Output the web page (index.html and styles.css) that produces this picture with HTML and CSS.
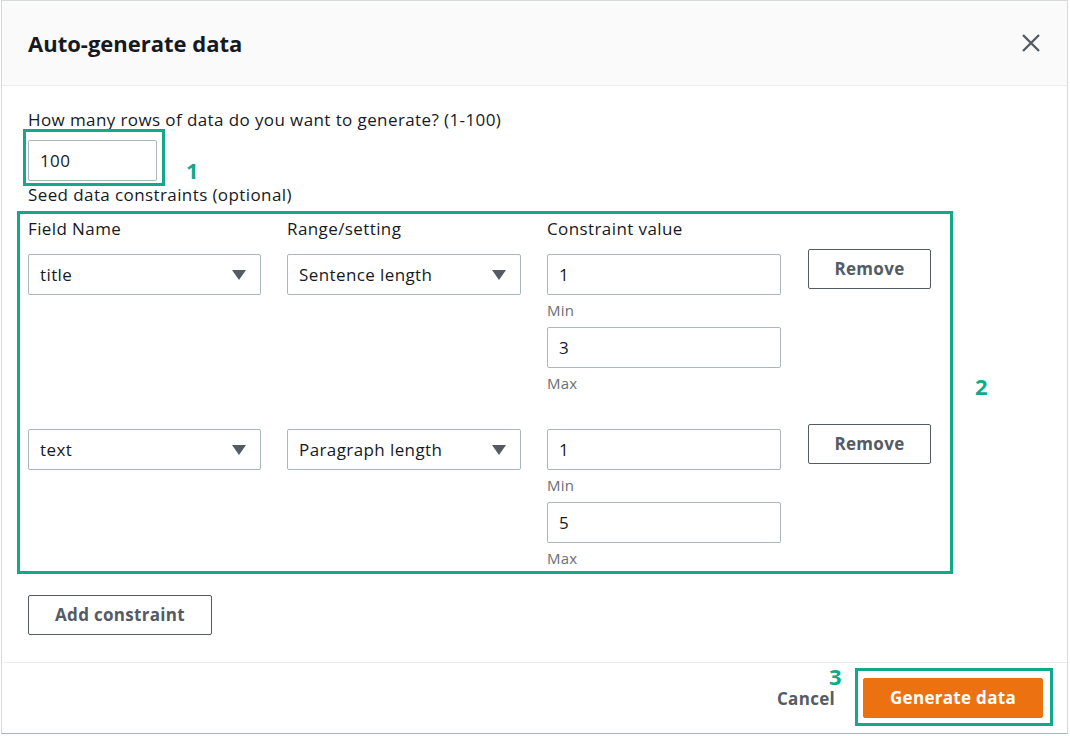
FILE: index.html
```html
<!DOCTYPE html>
<html lang="en">
<head>
<meta charset="utf-8">
<title>Auto-generate data</title>
<link rel="stylesheet" href="styles.css">
</head>
<body>
<div class="dialog">
  <header class="dlg-header">
    <h1 class="dlg-title">Auto-generate data</h1>
    <button class="close-btn" aria-label="Close">
      <svg width="20" height="20" viewBox="0 0 20 20"><path d="M2 2 L18 18 M18 2 L2 18" stroke="#545b64" stroke-width="2.4" fill="none"/></svg>
    </button>
  </header>

  <main class="dlg-body">
    <label class="field-label">How many rows of data do you want to generate? (1-100)</label>
    <div class="rows-field">
      <div class="input rows-input">100</div>
      <span class="anno-box anno-box-1"></span>
      <span class="anno-num anno-num-1">1</span>
    </div>
    <div class="field-label seed-label">Seed data constraints (optional)</div>

    <section class="constraints">
      <span class="anno-box anno-box-2"></span>
      <span class="anno-num anno-num-2">2</span>
      <div class="grid">
        <div class="col-head">Field Name</div>
        <div class="col-head">Range/setting</div>
        <div class="col-head">Constraint value</div>
        <div class="col-head"></div>

        <div class="select"><span>title</span><span class="caret"></span></div>
        <div class="select"><span>Sentence length</span><span class="caret"></span></div>
        <div class="value-stack">
          <div class="input">1</div>
          <div class="hint">Min</div>
          <div class="input second">3</div>
          <div class="hint">Max</div>
        </div>
        <div><button class="btn btn-normal remove">Remove</button></div>

        <div class="select row2"><span>text</span><span class="caret"></span></div>
        <div class="select row2"><span>Paragraph length</span><span class="caret"></span></div>
        <div class="value-stack row2">
          <div class="input">1</div>
          <div class="hint">Min</div>
          <div class="input second">5</div>
          <div class="hint">Max</div>
        </div>
        <div class="row2"><button class="btn btn-normal remove">Remove</button></div>
      </div>
    </section>

    <button class="btn btn-normal add-btn">Add constraint</button>
  </main>

  <footer class="dlg-footer">
    <button class="btn-link">Cancel</button>
    <div class="primary-wrap">
      <span class="anno-num anno-num-3">3</span>
      <span class="anno-box anno-box-3"></span>
      <button class="btn btn-primary">Generate data</button>
    </div>
  </footer>
</div>
</body>
</html>
```

FILE: styles.css
```css
* { box-sizing: border-box; }
html, body { margin: 0; padding: 0; background: #ffffff; }
body {
  font-family: "Open Sans", "Noto Sans", "Liberation Sans", sans-serif;
  color: #16191f;
  font-size: 17px;
  line-height: 22px;
  letter-spacing: 0.4px;
}

.dialog {
  width: 1067px;
  height: 734px;
  margin-left: 1px;
  border: 1px solid #d5dbdb;
  border-bottom-color: #aab7b8;
  display: flex;
  flex-direction: column;
  background: #fff;
}

.dlg-header {
  height: 85px;
  flex: none;
  background: #fafafa;
  border-bottom: 1px solid #eaeded;
  display: flex;
  align-items: center;
  justify-content: space-between;
  padding: 0 26px 0 26px;
}
.dlg-title {
  margin: 0;
  font-size: 22px;
  font-weight: 700;
  line-height: 28px;
  letter-spacing: 0;
  color: #16191f;
}
.close-btn {
  background: none;
  border: none;
  padding: 0;
  width: 20px;
  height: 20px;
  display: flex;
}

.dlg-body {
  flex: none;
  height: 577px;
  padding: 23px 26px 0 26px;
  border-bottom: 1px solid #eaeded;
}

.field-label {
  display: block;
  color: #16191f;
  font-size: 17px;
  line-height: 22px;
}
.rows-field {
  position: relative;
  margin-top: 9px;
  width: 129px;
}
.input {
  height: 41px;
  border: 1px solid #aab7b8;
  border-radius: 2px;
  padding: 0 11px;
  display: flex;
  align-items: center;
  color: #16191f;
  font-size: 17px;
  background: #fff;
}
.seed-label { margin-top: 3px; }

.anno-box {
  position: absolute;
  border: 3px solid #12a98b;
  pointer-events: none;
}
.anno-num {
  position: absolute;
  color: #12a98b;
  font-weight: 700;
  font-size: 22px;
  line-height: 16px;
  letter-spacing: 0;
}
.anno-box-1 { left: -5px; top: -11px; width: 142px; height: 57px; }
.anno-num-1 { left: 158px; top: 22px; }

.constraints {
  position: relative;
  margin-top: 12px;
}
.anno-box-2 { left: -11px; top: -7px; width: 936px; height: 363px; }
.anno-num-2 { left: 947px; top: 160px; }

.grid {
  display: grid;
  grid-template-columns: 233px 234px 234px 124px;
  column-gap: 26px;
  align-items: start;
}
.col-head {
  color: #16191f;
  font-size: 17px;
  line-height: 22px;
  margin-bottom: 14px;
}
.select {
  height: 41px;
  border: 1px solid #aab7b8;
  border-radius: 2px;
  padding: 0 14px 0 11px;
  display: flex;
  align-items: center;
  justify-content: space-between;
}
.caret {
  width: 0;
  height: 0;
  border-left: 7px solid transparent;
  border-right: 7px solid transparent;
  border-top: 10px solid #545b64;
}
.value-stack { display: flex; flex-direction: column; }
.hint {
  font-size: 15px;
  line-height: 20px;
  color: #687078;
  margin-top: 5px;
  letter-spacing: 0.2px;
}
.input.second { margin-top: 7px; }
.row2 { margin-top: 36px; }

.btn {
  font-family: inherit;
  font-size: 17px;
  font-weight: 700;
  line-height: 22px;
  letter-spacing: 0.3px;
  border-radius: 2px;
  cursor: pointer;
}
.btn-normal {
  background: #fff;
  border: 1px solid #545b64;
  color: #545b64;
  height: 40px;
}
.remove {
  width: 123px;
  margin-top: -5px;
  margin-left: 1px;
}
.add-btn {
  display: block;
  margin-top: 27px;
  width: 184px;
}

.dlg-footer {
  flex: 1;
  display: flex;
  justify-content: flex-end;
  align-items: center;
  padding: 0 24px 0 0;
  gap: 28px;
}
.btn-link {
  background: none;
  border: none;
  padding: 0;
  font-family: inherit;
  font-size: 17px;
  font-weight: 700;
  letter-spacing: 0.3px;
  color: #545b64;
  margin-top: 1px;
}
.primary-wrap {
  position: relative;
  display: flex;
}
.btn-primary {
  width: 180px;
  height: 40px;
  background: #ec7211;
  border: 1px solid #ec7211;
  color: #fff;
}
.anno-box-3 { left: -8px; top: -10px; width: 198px; height: 58px; }
.anno-num-3 { left: -34px; top: -10px; }
```
